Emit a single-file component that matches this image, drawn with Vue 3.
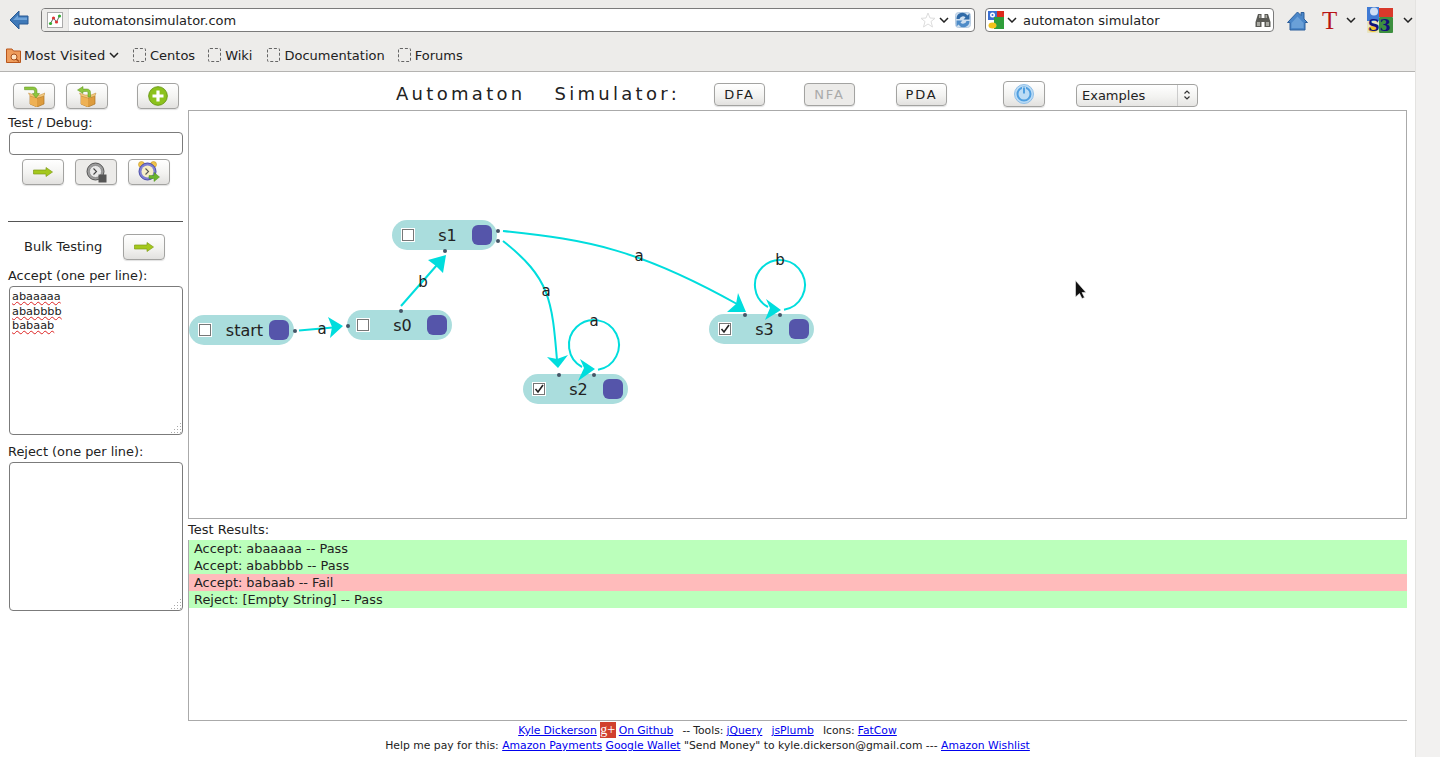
<script setup>
const nodes = [
  { name: 'start', x: 189, y: 315, final: false },
  { name: 's0', x: 347, y: 310, final: false },
  { name: 's1', x: 392, y: 220, final: false },
  { name: 's2', x: 523, y: 374, final: true },
  { name: 's3', x: 709, y: 314, final: true }
]

const edges = [
  'M299 330.5 L333 327.5',
  'M401 306 L437 265',
  'M503 231 C590 240 640 250 737 304',
  'M503 241 C550 278 552 300 557 360',
  'M598 369.7 A25 25 0 1 0 582 367',
  'M784 309.7 A25 25 0 1 0 768 307'
]

const heads = [
  '343,326 328,317 332,327 330,338',
  '446,255 428,260 436,266 443,273',
  '746,312 738,293 736,304 727,312',
  '558,368 547,357 557,359 568,355',
  '595,369 580,359 584,368 578,381',
  '781,310 766,299 770,308 765,320'
]

const dots = [
  [295, 331], [348, 326], [401, 311], [445, 251], [498, 231],
  [498, 241], [559, 375], [594, 375], [745, 315], [780, 315]
]

const labels = [
  { t: 'a', x: 322, y: 334 },
  { t: 'b', x: 423, y: 287 },
  { t: 'a', x: 639, y: 261 },
  { t: 'a', x: 546, y: 296 },
  { t: 'a', x: 594, y: 326 },
  { t: 'b', x: 780, y: 265 }
]

const results = [
  { text: 'Accept: abaaaaa -- Pass', pass: true },
  { text: 'Accept: ababbbb -- Pass', pass: true },
  { text: 'Accept: babaab -- Fail', pass: false },
  { text: 'Reject: [Empty String] -- Pass', pass: true }
]

const bookmarks = ['Centos', 'Wiki', 'Documentation', 'Forums']
const accept = ['abaaaaa', 'ababbbb', 'babaab']
</script>

<template>
  <div class="page">
    <div class="main">
      <!-- browser chrome -->
      <div class="chrome">
        <div class="navbar">
          <svg class="back" width="20" height="22" viewBox="0 0 20 22">
            <path d="M1 11 L10 2 V7 H19 V15 H10 V20 Z" fill="#3f79b8" stroke="#2a5a94" stroke-width="1" />
            <path d="M4 11 L9 6 V8.500 H18 V11 Z" fill="#6fa4da" />
          </svg>
          <div class="urlbar">
            <span class="favicon">
              <svg width="16" height="16" viewBox="0 0 16 16">
                <rect x="0.500" y="0.500" width="15" height="15" fill="#fff" stroke="#aaa" />
                <path d="M3.500 11.500 L6.500 6 L9.500 10 L12.500 4" fill="none" stroke="#666" stroke-width="1" />
                <circle cx="3.500" cy="11.500" r="1.600" fill="#3a3" />
                <circle cx="6.500" cy="6" r="1.600" fill="#d33" />
                <circle cx="9.500" cy="10" r="1.600" fill="#d33" />
                <circle cx="12.500" cy="4" r="1.600" fill="#3a3" />
              </svg>
            </span>
            <span class="urltext">automatonsimulator.com</span>
            <svg width="16" height="16" viewBox="0 0 16 16">
              <path d="M8 1 L10 6 L15 6.300 L11 9.500 L12.500 15 L8 12 L3.500 15 L5 9.500 L1 6.300 L6 6 Z" fill="#fff" stroke="#ddd" />
            </svg>
            <svg class="chev" width="10" height="6" viewBox="0 0 10 6"><path d="M1 1 L5 5 L9 1" fill="none" stroke="#222" stroke-width="1.500" /></svg>
            <svg class="reload" width="16" height="16" viewBox="0 0 16 16">
              <rect x="0.500" y="0.500" width="15" height="15" rx="3" fill="#cfdfef" stroke="#b8cde2" />
              <path d="M1.500 7 A6 6 0 0 1 12.500 3.500 L14.500 1.500 V7.500 H8.500 L10.500 5.500 A3.500 3.500 0 0 0 4.500 7 Z" fill="#2f6aa8" />
              <path d="M14.500 9 A6 6 0 0 1 3.500 12.500 L1.500 14.500 V8.500 H7.500 L5.500 10.500 A3.500 3.500 0 0 0 11.500 9 Z" fill="#4f8cc8" />
            </svg>
          </div>
          <div class="searchbar">
            <svg width="16" height="20" viewBox="0 0 16 20">
              <rect x="0" y="1" width="9" height="9" fill="#3b6fd1" />
              <rect x="9" y="1" width="7" height="6" fill="#dd2a1d" />
              <rect x="6" y="7" width="10" height="12" fill="#2f9e3a" />
              <rect x="0" y="10" width="6" height="9" fill="#fff" />
              <circle cx="4.500" cy="5" r="2.500" fill="#fff" />
              <circle cx="4.500" cy="5" r="1" fill="#3b6fd1" />
              <ellipse cx="4.500" cy="15.500" rx="4" ry="3" fill="#f2c21a" />
            </svg>
            <svg class="chev" width="10" height="6" viewBox="0 0 10 6"><path d="M1 1 L5 5 L9 1" fill="none" stroke="#222" stroke-width="1.500" /></svg>
            <span class="searchtext">automaton simulator</span>
            <svg width="16" height="15" viewBox="0 0 16 15">
              <path d="M3 1 H6.500 V5 H9.500 V1 H13 L15.500 9 V14 H9.500 V9 H6.500 V14 H0.500 V9 Z" fill="#5a5a55" />
              <path d="M2 9 H5 V13 H2 Z M11 9 H14 V13 H11 Z M4 2 H5.500 V5 H4 Z M10.500 2 H12 V5 H10.500 Z" fill="#a9a9a2" />
            </svg>
          </div>
          <svg class="home" width="21" height="21" viewBox="0 0 21 21">
            <path d="M0.500 12.500 L10.500 2 L14 5.500 V2.500 H17 V9 L20.500 12.500 H18 V20 H3 V12.500 Z" fill="#4a86c8" stroke="#2d5f9b" />
            <path d="M4.500 13 L10.500 6.500 L16.500 13 V18 H4.500 Z" fill="#6aa0d8" />
          </svg>
          <span class="tee">T</span>
          <svg class="chev tee-chev" width="10" height="6" viewBox="0 0 10 6"><path d="M1 1 L5 5 L9 1" fill="none" stroke="#222" stroke-width="1.500" /></svg>
          <svg class="sthree" width="26" height="30" viewBox="0 0 26 30">
            <rect x="0" y="0" width="26" height="26" rx="2" fill="#eee" />
            <rect x="12" y="1" width="14" height="9" fill="#d8392b" />
            <rect x="0" y="0" width="12" height="14" fill="#3f7ad4" />
            <ellipse cx="7" cy="4.500" rx="4" ry="4" fill="#cfdff5" />
            <rect x="12" y="10" width="14" height="16" rx="1" fill="#3d8f3f" />
            <rect x="0" y="14" width="12" height="12" rx="1" fill="#e8e4c0" />
            <ellipse cx="6" cy="22" rx="5" ry="3" fill="#f0c32d" />
            <text x="1" y="24" class="sthree-text">S3</text>
          </svg>
          <svg class="chev last-chev" width="10" height="6" viewBox="0 0 10 6"><path d="M1 1 L5 5 L9 1" fill="none" stroke="#222" stroke-width="1.500" /></svg>
        </div>
        <div class="bookmarks">
          <div class="most">
            <svg width="15" height="16" viewBox="0 0 15 16">
              <path d="M0.500 2 H6 L7.500 4 H14.500 V15.500 H0.500 Z" fill="#ee9c5c" stroke="#b8561c" />
              <circle cx="8" cy="10" r="3" fill="#fde3c4" stroke="#a8501c" />
              <path d="M10 12 L13 14.500" stroke="#a8501c" stroke-width="1.500" />
            </svg>
            <span class="most-text">Most Visited</span>
            <svg width="10" height="6" viewBox="0 0 10 6"><path d="M1 1 L5 5 L9 1" fill="none" stroke="#222" stroke-width="1.500" /></svg>
          </div>
          <div v-for="b in bookmarks" :key="b" class="mark">
            <span class="mark-box"></span>
            <span>{{ b }}</span>
          </div>
        </div>
      </div>

      <div class="body">
        <!-- left column -->
        <div class="side">
          <div class="side-top">
            <button class="btn">
              <svg width="22" height="21" viewBox="0 0 22 21">
                <path d="M7 10 L14 12 L21 10 V18 L14 21 L7 18 Z" fill="#dd9c3e" stroke="#ad7424" stroke-width="0.700" />
                <path d="M14 12 V21 L7 18 V10 Z" fill="#eeb154" />
                <path d="M5.500 7 L7 10 L14 12 L21 10 L22 7 L17 9 H11 Z" fill="#f3c97e" stroke="#c08a36" stroke-width="0.500" />
                <path d="M1.500 1 H10 C12.500 1 14 2.500 14 5 V7.500 H16.500 L13 12 L9.500 7.500 H11.500 V5.500 C11.500 4.300 11 3.700 9.500 3.700 H1.500 Z" fill="#8cc63f" stroke="#5d9216" stroke-width="0.500" />
              </svg>
            </button>
            <button class="btn">
              <svg width="22" height="21" viewBox="0 0 22 21">
                <path d="M5 10 L12 12 L19 10 V18 L12 21 L5 18 Z" fill="#dd9c3e" stroke="#ad7424" stroke-width="0.700" />
                <path d="M12 12 V21 L5 18 V10 Z" fill="#eeb154" />
                <path d="M3.500 7 L5 10 L12 12 L19 10 L20 7 L15 9 H9 Z" fill="#f3c97e" stroke="#c08a36" stroke-width="0.500" />
                <path d="M14.500 11 V6.500 C14.500 4.500 13 3 11 3 H7 V0.500 L1.500 4 L7 7.500 V5.500 H10.500 C11.500 5.500 12 6 12 7 V11 Z" fill="#8cc63f" stroke="#5d9216" stroke-width="0.500" />
              </svg>
            </button>
            <button class="btn btn-plus">
              <svg width="20" height="20" viewBox="0 0 20 20">
                <circle cx="10" cy="10" r="9.300" fill="#8cc21c" stroke="#6b9a18" stroke-width="1" />
                <path d="M10 4.500 V15.500 M4.500 10 H15.500" stroke="#fff" stroke-width="3.200" />
              </svg>
            </button>
          </div>
          <div class="label first">Test / Debug:</div>
          <div class="field"></div>
          <div class="side-run">
            <button class="btn">
              <svg width="20" height="10" viewBox="0 0 20 10"><path d="M0.500 3 H13 V0.500 L19.500 5 L13 9.500 V7 H0.500 Z" fill="#a4c81c" stroke="#7f9c18" stroke-width="0.700" /></svg>
            </button>
            <button class="btn btn-dim">
              <svg width="21" height="21" viewBox="0 0 21 21">
                <circle cx="9.500" cy="9.500" r="8.500" fill="#9b9b9b" stroke="#555" />
                <circle cx="9.500" cy="9.500" r="6" fill="#e8e8e8" stroke="#777" stroke-width="0.600" />
                <path d="M7.500 6.500 L10.500 9.500 L7.500 12.500" fill="none" stroke="#444" stroke-width="1.100" />
                <rect x="12.500" y="12.500" width="8" height="8" fill="#555" />
              </svg>
            </button>
            <button class="btn">
              <svg width="22" height="22" viewBox="0 0 22 22">
                <circle cx="3.500" cy="3.500" r="3" fill="#efc34b" stroke="#c79a28" stroke-width="0.600" />
                <circle cx="15.500" cy="3.500" r="3" fill="#efc34b" stroke="#c79a28" stroke-width="0.600" />
                <circle cx="9.500" cy="10.500" r="8.500" fill="#7d7fd4" stroke="#4a4ca8" />
                <circle cx="9.500" cy="10.500" r="6" fill="#f6eec8" />
                <path d="M7.500 7.500 L10.500 10.500 L7.500 13.500" fill="none" stroke="#555" stroke-width="1.100" />
                <path d="M11 14.500 H16 V11.500 L21.500 16 L16 20.500 V17.500 H11 Z" fill="#6bb52c" stroke="#4e8c1a" stroke-width="0.500" />
              </svg>
            </button>
          </div>
          <div class="rule"></div>
          <div class="bulk">
            <span>Bulk Testing</span>
            <button class="btn">
              <svg width="20" height="10" viewBox="0 0 20 10"><path d="M0.500 3 H13 V0.500 L19.500 5 L13 9.500 V7 H0.500 Z" fill="#a4c81c" stroke="#7f9c18" stroke-width="0.700" /></svg>
            </button>
          </div>
          <div class="label accept-label">Accept (one per line):</div>
          <div class="area">
            <div v-for="a in accept" :key="a"><span class="typo">{{ a }}</span></div>
            <span class="grip"></span>
          </div>
          <div class="label reject-label">Reject (one per line):</div>
          <div class="area"><span class="grip"></span></div>
        </div>

        <!-- right column -->
        <div class="content">
          <div class="head">
            <span class="title">Automaton&nbsp;&nbsp; Simulator:</span>
            <button class="btn tbtn dfa">DFA</button>
            <button class="btn tbtn nfa" disabled>NFA</button>
            <button class="btn tbtn pda">PDA</button>
            <button class="btn power">
              <svg width="20" height="20" viewBox="0 0 20 20">
                <circle cx="10" cy="10" r="9.500" fill="#bcdcf5" stroke="#8fbfe8" />
                <circle cx="10" cy="10" r="6.500" fill="none" stroke="#4f9fe0" stroke-width="2" />
                <path d="M10 3 V10" stroke="#bcdcf5" stroke-width="4" />
                <path d="M10 3.500 V9.500" stroke="#4f9fe0" stroke-width="2" />
              </svg>
            </button>
            <div class="select">
              <span class="select-text">Examples</span>
              <svg width="8" height="12" viewBox="0 0 8 12">
                <path d="M1.500 4.500 L4 2 L6.500 4.500 M1.500 7.500 L4 10 L6.500 7.500" fill="none" stroke="#333" stroke-width="1.200" />
              </svg>
            </div>
          </div>

          <div class="canvas">
            <div
              v-for="n in nodes"
              :key="n.name"
              class="node"
              :style="{ left: n.x - 189 + 'px', top: n.y - 111 + 'px' }"
            >
              <span class="check">
                <svg v-if="n.final" width="10" height="10" viewBox="0 0 10 10">
                  <path d="M1.500 5 L4 8 L9 1" fill="none" stroke="#222" stroke-width="1.600" />
                </svg>
              </span>
              <span class="node-name">{{ n.name }}</span>
              <span class="node-end"></span>
            </div>
            <svg class="wires" width="1217" height="407" viewBox="189 111 1217 407">
              <path v-for="e in edges" :key="e" :d="e" fill="none" stroke="#00dddd" stroke-width="2" />
              <polygon v-for="h in heads" :key="h" :points="h" fill="#00dddd" />
              <circle v-for="d in dots" :key="d.join()" :cx="d[0]" :cy="d[1]" r="2" fill="#445566" />
              <text v-for="l in labels" :key="l.x" :x="l.x" :y="l.y" class="edge-label">{{ l.t }}</text>
              <path d="M1075.500 280.500 V297 L1079.500 293.500 L1082 298.500 L1084.500 297.500 L1082 292.500 L1086 292.500 Z" fill="#111" stroke="#eee" stroke-width="0.600" />
            </svg>
          </div>

          <div class="results-label">Test Results:</div>
          <div class="results">
            <div
              v-for="r in results"
              :key="r.text"
              class="row"
              :class="r.pass ? 'pass' : 'fail'"
            >{{ r.text }}</div>
          </div>
        </div>
      </div>

      <div class="foot">
        <div class="foot-first">
          <a>Kyle Dickerson</a>
          <span class="gplus">g+</span>
          <a>On Github</a>
          &nbsp; -- Tools: <a>jQuery</a> &nbsp; <a>jsPlumb</a> &nbsp; Icons: <a>FatCow</a>
        </div>
        <div>
          Help me pay for this: <a>Amazon Payments</a> <a>Google Wallet</a> "Send Money" to kyle.dickerson@gmail.com --- <a>Amazon Wishlist</a>
        </div>
      </div>
    </div>
    <div class="scrollbar"></div>
  </div>
</template>

<style>
html,
body {
  margin: 0;
  overflow: hidden;
}
</style>

<style scoped>
.page {
  display: flex;
  width: 1440px;
  height: 757px;
  overflow: hidden;
  font-family: "DejaVu Sans", sans-serif;
  color: #222;
  background: #fff;
}

.main {
  width: 1415px;
  flex: none;
}

.scrollbar {
  flex: 1;
  background: #f2f1f0;
  border-left: 1px solid #e4e3e1;
}

.chrome {
  height: 71px;
  background: #edecea;
  border-bottom: 1px solid #b4b3b1;
}

.navbar {
  display: flex;
  align-items: center;
  height: 40px;
  padding-left: 9px;
}

.back {
  flex: none;
}

.urlbar,
.searchbar {
  display: flex;
  align-items: center;
  box-sizing: border-box;
  height: 24px;
  background: #fff;
  border: 1px solid #7b7b7b;
  border-radius: 4px;
  font-size: 13px;
}

.urlbar {
  width: 934px;
  margin-left: 12px;
}

.favicon {
  display: flex;
  align-items: center;
  justify-content: center;
  align-self: stretch;
  width: 26px;
  background: #edecea;
  border-right: 1px solid #ddd;
  border-radius: 3px 0 0 3px;
}

.urltext {
  flex: 1;
  margin-left: 4px;
}

.chev {
  flex: none;
  margin-left: 3px;
}

.reload {
  margin: 0 3px 0 6px;
}

.searchbar {
  width: 289px;
  margin-left: 10px;
  padding: 0 2px 0 2px;
}

.searchtext {
  flex: 1;
  margin-left: 6px;
}

.home {
  margin-left: 13px;
}

.tee {
  margin-left: 14px;
  font-family: "Liberation Serif", serif;
  font-size: 25px;
  line-height: 25px;
  color: #b81414;
}

.tee-chev {
  margin-left: 9px;
}

.sthree {
  margin-top: 4px;
  margin-left: 11px;
}

.sthree-text {
  font-family: "DejaVu Serif", serif;
  font-size: 16px;
  font-weight: 700;
  fill: #12127a;
}

.last-chev {
  margin-left: 10px;
}

.bookmarks {
  display: flex;
  align-items: center;
  height: 30px;
  padding-left: 6px;
  font-size: 13px;
}

.most {
  display: flex;
  align-items: center;
  gap: 3px;
  width: 127px;
}

.most-text {
  letter-spacing: 0.200px;
}

.mark {
  display: flex;
  align-items: center;
  gap: 4px;
  margin-right: 13px;
}

.mark:nth-child(3) {
  margin-right: 15px;
}

.mark:nth-child(4) {
  margin-right: 13px;
}

.mark-box {
  box-sizing: border-box;
  width: 13px;
  height: 14px;
  border: 1px dashed #666;
  border-radius: 2px;
}

.body {
  display: flex;
}

.side {
  box-sizing: border-box;
  width: 188px;
  padding: 11px 5px 0 8px;
}

.side-top {
  display: flex;
  padding-left: 5px;
  gap: 11px;
}

.btn {
  display: flex;
  align-items: center;
  justify-content: center;
  box-sizing: border-box;
  width: 42px;
  height: 26px;
  padding: 0;
  background: linear-gradient(#fff, #f3f3f1 55%, #e2e1df);
  border: 1px solid #a3a3a1;
  border-radius: 4px;
  box-shadow: 0 1px 1px rgba(0, 0, 0, 0.12);
}

.btn-plus {
  margin-left: 18px;
}

.btn-dim {
  background: #ecebe9;
}

.label {
  height: 16px;
  font-size: 12.900px;
  line-height: 16px;
}

.first {
  margin-top: 6px;
}

.field {
  box-sizing: border-box;
  width: 174px;
  height: 23px;
  margin: 1px 0 0 1px;
  background: #fff;
  border: 1px solid #7b7b7b;
  border-radius: 4px;
}

.side-run {
  display: flex;
  gap: 11px;
  margin-top: 4px;
  padding-left: 14px;
}

.rule {
  width: 175px;
  margin-top: 36px;
  border-top: 1px solid #555;
}

.bulk {
  display: flex;
  align-items: center;
  margin-top: 12px;
  padding-left: 16px;
  font-size: 13px;
}

.bulk span {
  width: 99px;
  margin-top: -2px;
}

.accept-label {
  margin-top: 8px;
}

.reject-label {
  margin-top: 9px;
}

.area {
  position: relative;
  box-sizing: border-box;
  width: 174px;
  height: 149px;
  margin: 2px 0 0 1px;
  padding: 3px 2px;
  background: #fff;
  border: 1px solid #7b7b7b;
  border-radius: 4px;
  font-size: 11.300px;
  line-height: 14.500px;
}

.typo {
  text-decoration: underline wavy #dd2222 1px;
  text-underline-offset: 1px;
}

.grip {
  position: absolute;
  right: 1px;
  bottom: 1px;
  width: 11px;
  height: 11px;
  background: radial-gradient(circle, #aaa 0.700px, transparent 1px) 0 0 / 3px 3px;
  clip-path: polygon(100% 0, 100% 100%, 0 100%);
}

.content {
  width: 1219px;
}

.head {
  display: flex;
  align-items: center;
  box-sizing: border-box;
  height: 38px;
  padding-top: 6px;
}

.title {
  margin-left: 208px;
  width: 318px;
  margin-top: -2px;
  font-size: 18px;
  letter-spacing: 3.300px;
  word-spacing: 0.600px;
  white-space: nowrap;
}

.tbtn {
  width: 51px;
  height: 23px;
  margin-top: 1px;
  font-family: inherit;
  font-size: 13px;
  letter-spacing: 1.800px;
  color: #222;
}

.nfa {
  margin-left: 39px;
  color: #aaa;
  background: #ecebe9;
}

.pda {
  margin-left: 41px;
}

.power {
  margin-left: 56px;
}

.select {
  display: flex;
  align-items: center;
  box-sizing: border-box;
  width: 122px;
  height: 23px;
  margin: 2px 0 0 31px;
  padding: 0 6px 0 5px;
  background: linear-gradient(#fff, #f3f3f1 55%, #e6e5e3);
  border: 1px solid #a3a3a1;
  border-radius: 4px;
  font-size: 13px;
}

.select-text {
  flex: 1;
  align-self: stretch;
  margin-right: 5px;
  line-height: 21px;
  border-right: 1px solid #ccc;
}

.canvas {
  position: relative;
  box-sizing: border-box;
  height: 409px;
  border: 1px solid #aaa;
}

.wires {
  position: absolute;
  top: 0;
  left: 0;
  pointer-events: none;
}

.edge-label {
  font-size: 15px;
  text-anchor: middle;
  fill: #222;
}

.node {
  position: absolute;
  display: flex;
  align-items: center;
  box-sizing: border-box;
  width: 105px;
  height: 30px;
  padding: 0 5px 0 10px;
  background: #aadddd;
  border-radius: 15px;
  font-size: 16px;
}

.check {
  display: flex;
  align-items: center;
  justify-content: center;
  flex: none;
  box-sizing: border-box;
  width: 12px;
  height: 12px;
  background: #fff;
  border: 1px solid #777;
  outline: 1px solid #fff;
}

.node-name {
  flex: 1;
  padding-left: 9px;
  text-align: center;
}

.node-end {
  flex: none;
  width: 20px;
  height: 20px;
  background: #5555aa;
  border-radius: 6px;
}

.results-label {
  height: 16px;
  margin-top: 3px;
  font-size: 13px;
  line-height: 16px;
}

.results {
  box-sizing: border-box;
  height: 181px;
  margin-top: 2px;
  border-left: 1px solid #aaa;
  border-bottom: 1px solid #aaa;
}

.row {
  height: 17px;
  padding-left: 5px;
  font-size: 12.900px;
  line-height: 17px;
}

.pass {
  background: #bbffbb;
}

.fail {
  background: #ffbbbb;
}

.foot {
  padding-top: 1px;
  font-size: 10.800px;
  line-height: 15px;
  text-align: center;
}

.foot-first {
  word-spacing: -0.400px;
}

.foot a {
  color: #0000ee;
  text-decoration: underline;
}

.gplus {
  display: inline-block;
  width: 16px;
  height: 16px;
  margin: 0 3px -3px 3px;
  background: #d1402e;
  color: #fff;
  font-family: "Liberation Serif", serif;
  font-size: 14px;
  line-height: 15px;
  vertical-align: baseline;
}
</style>
